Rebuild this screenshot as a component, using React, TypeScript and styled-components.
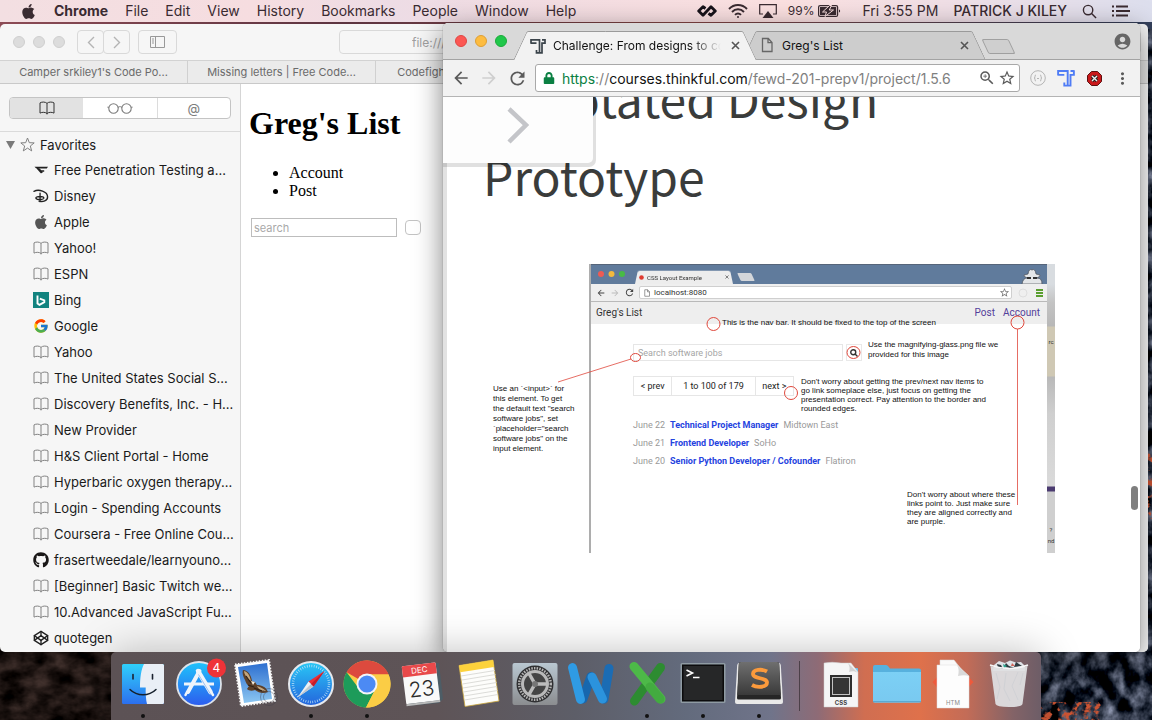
import React from "react";
import styled, { createGlobalStyle } from "styled-components";
import { FaApple, FaGithub, FaLock } from "react-icons/fa";
import { FcGoogle } from "react-icons/fc";
import { FiCodepen } from "react-icons/fi";
import {
  MdAccountCircle,
  MdArrowBack,
  MdArrowForward,
  MdMoreVert,
  MdRefresh,
  MdStarBorder,
  MdZoomIn,
} from "react-icons/md";

const GlobalStyle = createGlobalStyle`
  * { box-sizing: border-box; }
  body { margin: 0; font-family: Inter, "Liberation Sans", sans-serif; }
  button, input { font: inherit; color: inherit; margin: 0; padding: 0; }
  button { background: none; border: 0; }
  a { text-decoration: none; color: inherit; }
  ul { list-style: none; margin: 0; padding: 0; }
  svg { display: block; flex: none; }
`;

/* ---------- desktop ---------- */

const Desktop = styled.div`
  position: relative;
  display: grid;
  grid-template-rows: 23px minmax(0, 1fr) 68px;
  height: 100vh;
  overflow: hidden;
  background: linear-gradient(90deg, #8c4b55, #5c3440 30%, #8b4a48 60%, #33405c);
`;

const Wallpaper = styled.svg`
  position: absolute;
  left: 0;
  bottom: 0;
  width: 100%;
  height: 96%;
`;

const Workspace = styled.main`
  position: relative;
  min-width: 0;
`;

/* ---------- menu bar ---------- */

const MenuBar = styled.header`
  position: relative;
  display: flex;
  align-items: center;
  justify-content: space-between;
  height: 22px;
  padding: 0 22px 0 20px;
  font-size: 14px;
  line-height: 22px;
  color: #3a2b31;
  white-space: nowrap;
  background: linear-gradient(90deg, #f3dfe2, #f6dde0 22%, #eddce5 34%, #f3dde2 48%, #fbe0e0 68%, #f0dfe6 82%, #dddfee);
`;

const MenuGroup = styled.div<{ $gap: number }>`
  display: flex;
  align-items: center;
  gap: ${(p) => p.$gap}px;
`;

const MenuItem = styled.button<{ $weight?: number }>`
  font-weight: ${(p) => p.$weight ?? 400};
`;

const BatteryText = styled.span`
  font-size: 12px;
`;

/* ---------- safari ---------- */

const SafariWindow = styled.section`
  position: absolute;
  inset: 1px 4px 0 0;
  display: flex;
  flex-direction: column;
  overflow: hidden;
  border-radius: 5px;
  background: #f6f6f6;
`;

const SafariToolbar = styled.div`
  display: flex;
  align-items: center;
  height: 37px;
  padding: 0 7px 0 13px;
  border-bottom: 1px solid #d2d2d2;
`;

const Lights = styled.div<{ $gap: number }>`
  display: flex;
  gap: ${(p) => p.$gap}px;
`;

const Light = styled.button<{ $fill: string; $edge: string }>`
  width: 12px;
  height: 12px;
  border-radius: 50%;
  background: ${(p) => p.$fill};
  border: 1px solid ${(p) => p.$edge};
`;

const ToolButtons = styled.div`
  display: flex;
  margin-left: 12px;
  & + & { margin-left: 9px; }
`;

const ToolButton = styled.button<{ $width: number }>`
  display: flex;
  align-items: center;
  justify-content: center;
  width: ${(p) => p.$width}px;
  height: 24px;
  border: 1px solid #d9d9d9;
  border-radius: 4px;
  margin-right: -1px;
  color: #b4b4b4;
`;

const SafariAddress = styled.input`
  flex: 1;
  height: 24px;
  margin-left: 163px;
  padding-left: 72px;
  border: 1px solid #d9d9d9;
  border-radius: 4px;
  background: transparent;
  font-size: 12px;
  color: #a0a0a0;
`;

const SafariTabs = styled.div`
  display: flex;
  height: 23px;
  border-bottom: 1px solid #c9c9c9;
  background: #ebebeb;
`;

const SafariTab = styled.button`
  width: 188px;
  border-right: 1px solid #d0d0d0;
  font-size: 11px;
  color: #6a6a6a;
  white-space: nowrap;
`;

const SafariBody = styled.div`
  display: flex;
  flex: 1;
  min-height: 0;
`;

const Sidebar = styled.aside`
  width: 241px;
  flex: none;
  border-right: 1px solid #d5d5d5;
`;

const SegmentBar = styled.div`
  padding: 13px 9px 12px;
  border-bottom: 1px solid #dadada;
`;

const Segments = styled.div`
  display: grid;
  grid-template-columns: 1fr 1fr 1fr;
  height: 22px;
  overflow: hidden;
  border: 1px solid #c4c4c4;
  border-radius: 4px;
  background: #fff;
`;

const Segment = styled.button<{ $on?: boolean }>`
  display: flex;
  align-items: center;
  justify-content: center;
  font-size: 13px;
  color: ${(p) => (p.$on ? "#333" : "#7d7d7d")};
  background: ${(p) => (p.$on ? "#e2e2e2" : "transparent")};
  & + & + & { border-left: 1px solid #dcdcdc; }
`;

const FavoritesHead = styled.div`
  display: flex;
  align-items: center;
  gap: 5px;
  height: 25px;
  padding-left: 6px;
  font-size: 13px;
  color: #1a1a1a;
`;

const BookmarkLink = styled.a`
  display: flex;
  align-items: center;
  gap: 5px;
  height: 26px;
  padding-left: 33px;
  font-size: 13px;
  color: #1a1a1a;
  white-space: nowrap;
`;

const GregPage = styled.article`
  flex: 1;
  padding: 0 8px;
  background: #fff;
  color: #000;
  font-family: "Liberation Serif", serif;
  font-size: 16px;
  line-height: 18px;
`;

const GregTitle = styled.h1`
  margin: 21px 0 22px;
  font-size: 32px;
  line-height: 37px;
`;

const GregList = styled.ul`
  list-style: disc;
  padding-left: 40px;
  margin-bottom: 18px;
`;

const GregForm = styled.form`
  display: flex;
  align-items: center;
  gap: 8px;
  padding-left: 2px;
`;

const GregInput = styled.input`
  width: 146px;
  height: 19px;
  padding: 0 2px;
  border: 1px solid #bdbdbd;
  font: 11px Inter, sans-serif;
  &::placeholder { color: #a9a9a9; opacity: 1; }
`;

const GregSubmit = styled.button`
  width: 16px;
  height: 15px;
  border: 1px solid #c3c3c3;
  border-radius: 4px;
  background: #fff;
`;

/* ---------- chrome ---------- */

const ChromeWindow = styled.section`
  position: absolute;
  inset: 0 12px 0 443px;
  display: flex;
  flex-direction: column;
  border-radius: 5px;
  background: #fff;
  box-shadow: 0 0 1px rgba(0, 0, 0, 0.6), 0 8px 28px rgba(0, 0, 0, 0.5);
`;

const TabStrip = styled.div`
  display: flex;
  align-items: flex-end;
  height: 37px;
  padding: 0 8px 0 12px;
  border-bottom: 1px solid #a3a3a3;
  border-radius: 5px 5px 0 0;
  background: #d9d9d9;
`;

const StripLights = styled.div`
  align-self: center;
  margin-right: 13px;
`;

const ChromeTab = styled.div<{ $active?: boolean }>`
  position: relative;
  z-index: ${(p) => (p.$active ? 2 : 1)};
  display: flex;
  align-items: center;
  width: 230px;
  height: ${(p) => (p.$active ? 29 : 28)}px;
  margin-right: -1px;
  margin-bottom: ${(p) => (p.$active ? -1 : 0)}px;
  padding: 0 10px;
  font-size: 12px;
  color: #111;
  &::before,
  &::after {
    content: "";
    position: absolute;
    z-index: -1;
    top: 0;
    bottom: 0;
    background: ${(p) => (p.$active ? "#f2f2f2" : "#cdcdcd")};
    border-top: 1px solid #9a9a9a;
  }
  &::before {
    left: 0;
    right: 40%;
    border-left: 1px solid #9a9a9a;
    border-top-left-radius: 2px;
    transform: skewX(-25deg);
  }
  &::after {
    left: 40%;
    right: 0;
    border-right: 1px solid #9a9a9a;
    border-top-right-radius: 2px;
    transform: skewX(25deg);
  }
`;

const TabLabel = styled.a<{ $fade?: boolean }>`
  flex: 1;
  min-width: 0;
  margin: 0 10px 0 7px;
  overflow: hidden;
  white-space: nowrap;
  mask-image: ${(p) => (p.$fade ? "linear-gradient(90deg, #000 82%, transparent)" : "none")};
`;

const NewTab = styled.button`
  width: 27px;
  height: 15px;
  margin: 0 0 5px 7px;
  border: 1px solid #a0a0a0;
  border-radius: 2px;
  background: #cfcfcf;
  transform: skewX(25deg);
`;

const Profile = styled.button`
  align-self: center;
  margin-left: auto;
  color: #666;
`;

const ChromeToolbar = styled.div`
  display: flex;
  align-items: center;
  gap: 8px;
  height: 37px;
  padding: 0 8px;
  border-bottom: 1px solid #b4b4b4;
  background: #f2f2f2;
  color: #5a5a5a;
`;

const IconButton = styled.button<{ $dim?: boolean }>`
  display: flex;
  align-items: center;
  justify-content: center;
  width: 20px;
  height: 20px;
  flex: none;
  color: ${(p) => (p.$dim ? "#cfcfcf" : "#5a5a5a")};
`;

const Omnibox = styled.div`
  display: flex;
  align-items: center;
  flex: 1;
  min-width: 0;
  height: 28px;
  padding: 0 2px 0 7px;
  border: 1px solid #a9a9a9;
  border-radius: 3px;
  background: #fff;
`;

const Url = styled.div`
  display: flex;
  flex: 1;
  margin-left: 7px;
  font-size: 14px;
  white-space: nowrap;
  overflow: hidden;
`;

const UrlPart = styled.span<{ $color: string }>`
  color: ${(p) => p.$color};
`;

const Extensions = styled.div`
  display: flex;
  gap: 8px;
`;

const Viewport = styled.div`
  position: relative;
  flex: 1;
  min-height: 0;
  overflow: hidden;
  border-radius: 0 0 5px 5px;
  background: linear-gradient(90deg, #e2e2e2 4px, #fff 4px);
`;

const PagePanel = styled.button`
  position: absolute;
  top: 0;
  left: 0;
  display: flex;
  justify-content: center;
  width: 150px;
  height: 66px;
  padding-top: 9px;
  border-radius: 0 0 5px 0;
  background: #fdfdfd;
  box-shadow: 1px 2px 0 2px rgba(0, 0, 0, 0.12);
`;

const Lesson = styled.article`
  padding: 0 38px 0 40px;
`;

const LessonTitle = styled.h1`
  margin: -39px 0 50px;
  font: 400 48px "Noto Sans CJK SC", "Noto Sans", sans-serif;
  line-height: 78px;
  color: #3a3c3b;
`;

const ScrollThumb = styled.div`
  position: absolute;
  right: 2px;
  top: 70%;
  width: 7px;
  height: 24px;
  border-radius: 4px;
  background: #7f7f7f;
`;

/* ---------- annotated figure ---------- */

const Figure = styled.figure`
  position: relative;
  width: 564px;
  margin: 0 0 0 9px;
  padding-left: 97px;
`;

const Note = styled.p<{ $x: number; $y: number; $leading: number }>`
  position: absolute;
  left: ${(p) => p.$x}px;
  top: ${(p) => p.$y}px;
  margin: 0;
  font: 8px "Liberation Sans", sans-serif;
  line-height: ${(p) => p.$leading}px;
  color: #111;
  white-space: pre;
`;

const Marks = styled.svg`
  position: absolute;
  left: 0;
  top: 0;
  overflow: visible;
`;

const Shot = styled.div`
  display: flex;
  height: 289px;
  border-left: 2px solid #adadad;
  font-family: Roboto, sans-serif;
  font-size: 9px;
  line-height: 11px;
  color: #333;
`;

const ShotWindow = styled.div`
  width: 456px;
`;

const ShotTabs = styled.div`
  display: flex;
  align-items: flex-end;
  height: 20px;
  padding-left: 7px;
  border-top: 1px solid #56657a;
  background: #607b9c;
`;

const ShotTab = styled.div`
  position: relative;
  z-index: 1;
  display: flex;
  align-items: center;
  gap: 3px;
  width: 98px;
  height: 14px;
  margin-left: 9px;
  padding: 0 4px;
  font-size: 6px;
  &::before {
    content: "";
    position: absolute;
    z-index: -1;
    inset: 0;
    background: #ededed;
    border-radius: 2px 2px 0 0;
    transform: perspective(20px) rotateX(5deg);
    transform-origin: bottom;
  }
`;

const ShotNewTab = styled.div`
  width: 14px;
  height: 8px;
  margin: 0 0 3px 6px;
  border-radius: 1px;
  background: #d3d6da;
  transform: skewX(25deg);
`;

const ShotBar = styled.div`
  display: flex;
  align-items: center;
  gap: 4px;
  height: 18px;
  padding: 0 3px 0 5px;
  border-bottom: 1px solid #b9b9b9;
  background: #efefef;
`;

const ShotAddress = styled.div`
  display: flex;
  align-items: center;
  gap: 3px;
  flex: 1;
  height: 13px;
  padding: 0 1px 0 3px;
  border: 1px solid #cfcfcf;
  border-radius: 2px;
  background: #fff;
  font-size: 8px;
`;

const ShotAddressText = styled.span`
  flex: 1;
  white-space: nowrap;
`;

const ShotNav = styled.div`
  display: flex;
  gap: 8px;
  height: 22px;
  padding: 5px 7px 0 5px;
  background: #eee;
  font-size: 10px;
`;

const ShotBrand = styled.span`
  flex: 1;
`;

const PurpleLink = styled.a`
  color: #52409a;
`;

const ShotBody = styled.div`
  padding: 20px 42px;
`;

const ShotSearch = styled.form`
  display: flex;
  gap: 3px;
  margin-bottom: 15px;
`;

const ShotInput = styled.input`
  width: 210px;
  height: 17px;
  padding: 0 4px;
  border: 1px solid #e6e6e6;
  background: transparent;
  &::placeholder { color: #a5a5a5; opacity: 1; }
`;

const ShotSubmit = styled.button`
  display: flex;
  align-items: center;
  justify-content: center;
  width: 16px;
  height: 17px;
  border: 1px solid #e9e9e9;
`;

const Pager = styled.div`
  display: flex;
  width: 161px;
  height: 20px;
  margin-bottom: 20px;
  border: 1px solid #e6e6e6;
`;

const PagerCell = styled.button<{ $grow: number }>`
  flex: ${(p) => p.$grow} 0 0;
  color: #222;
  & + & { border-left: 1px solid #e6e6e6; }
`;

const JobRow = styled.li`
  display: flex;
  gap: 5px;
  height: 18px;
  line-height: 18px;
  color: #999;
  white-space: nowrap;
`;

const JobLink = styled.a`
  font-weight: 700;
  color: #2543e0;
`;

const Backdrop = styled.div`
  display: flex;
  flex-direction: column;
  align-items: center;
  width: 8px;
  padding-top: 72px;
  overflow: hidden;
  background: linear-gradient(
      #d8dce0 0 20px, #c4c4c4 38px, #b8b8b8 62px, #cfc8b4 63px 112px, #b9b9b9 113px,
      #cfcfcf 150px, #dadada 222px, #4b3b70 223px 227px, #cfcfcf 228px
    );
  font-size: 6px;
`;

const BackdropGap = styled.div`
  height: 177px;
  flex: none;
`;

/* ---------- dock ---------- */

const DockArea = styled.footer`
  position: relative;
  display: flex;
  justify-content: center;
`;

const DockBar = styled.nav`
  display: flex;
  padding: 0 4px;
  border-radius: 5px 5px 0 0;
  background: linear-gradient(
    90deg, #5c5255, #5e5457 35%, #5d5e68 50%, #636b7d 62%, #70748a 71%, #8e6b76 76%,
    #d06e51 81%, #df714b 87%, #c36c57 92%, #836367 97%, #6d5d67
  );
  box-shadow: 0 0 40px rgba(0, 0, 0, 0.25);
`;

const DockItem = styled.button<{ $running?: boolean }>`
  position: relative;
  display: flex;
  justify-content: center;
  width: 56px;
  padding-top: 7px;
  &::after {
    content: "";
    position: absolute;
    bottom: 2px;
    left: 26px;
    width: 4px;
    height: 4px;
    border-radius: 50%;
    background: ${(p) => (p.$running ? "#111" : "transparent")};
  }
`;

const DockDivider = styled.div`
  width: 26px;
  padding: 9px 12px;
  &::before {
    content: "";
    display: block;
    width: 1px;
    height: 50px;
    background: #4b4048;
  }
`;

/* ---------- drawings ---------- */

const BookIcon = ({ color = "currentColor" }: { color?: string }) => (
  <svg width="16" height="14" viewBox="0 0 16 14" fill="none" stroke={color}>
    <path d="M8 2.400C6.600.800 3 .600 1 1.900v10.200c2-1.200 5.600-1 7 .4 1.400-1.400 5-1.600 7-.4V1.900C13 .6 9.400.8 8 2.400v11" />
  </svg>
);

const WingGlyph = () => (
  <svg width="16" height="16" viewBox="0 0 16 16">
    <path d="M1.500 4.800H15l-1.200 1.700H5.500L3 6.300Z" fill="#222" />
    <path d="M4 6l4 4.500 1.500-.2M5.500 6.500l2.700 2.500h3" fill="none" stroke="#222" strokeWidth="1.300" />
  </svg>
);

const DisneyGlyph = () => (
  <svg width="16" height="16" viewBox="0 0 17 16" fill="none" stroke="#222" strokeLinecap="round">
    <path d="M1 3c5-2.500 14.500 0 14.500 6 0 4-5 5.500-9 4.500" strokeWidth="1.500" />
    <path d="M7.500 5v9M3 10c0-2 9-2 8.500.3C11 12 4 12.500 3 10Z" strokeWidth="1.400" />
  </svg>
);

const BingGlyph = () => (
  <svg width="16" height="16" viewBox="0 0 16 16">
    <rect width="16" height="16" fill="#12837f" />
    <path d="M4.500 3.500v8l2 1.300 4.800-2.700V8.300L6.800 6.600" fill="none" stroke="#fff" strokeWidth="1.900" />
  </svg>
);

const ThinkfulGlyph = ({ color, size }: { color: string; size: number }) => (
  <svg width={size} height={size} viewBox="0 0 16 16" fill="none" stroke={color} strokeWidth="1.700">
    <path d="M1 5.800V1.800h8.500v13M1 5.200h5.500M15 1v4.200h-3v9.600H6.500V12M12 1.800h3" />
  </svg>
);

const PageGlyph = ({ size }: { size: number }) => (
  <svg width={size} height={size} viewBox="0 0 16 16" fill="none" stroke="#666" strokeWidth="1.300">
    <path d="M3.500 1.500h5.800l3.700 4v9H3.500ZM9 1.500v4.200h4" />
  </svg>
);

const CloseGlyph = ({ size = 9 }: { size?: number }) => (
  <svg width={size} height={size} viewBox="0 0 9 9" stroke="#555" strokeWidth="1.600">
    <path d="M1 1l7 7M8 1L1 8" />
  </svg>
);

const MagnifierGlyph = ({ size, weight }: { size: number; weight: number }) => (
  <svg width={size} height={size} viewBox="0 0 16 16" fill="none" stroke="currentColor" strokeWidth={weight}>
    <circle cx="6.500" cy="6.500" r="5" />
    <path d="M10.200 10.200L15 15" />
  </svg>
);

const InfinityGlyph = () => (
  <svg width="20" height="12" viewBox="0 0 20 12" fill="none" stroke="#17131a" strokeWidth="2.800" strokeLinejoin="round">
    <path d="M8.500 3.500L6 1.700 1.700 6 6 10.300 14 1.700 18.300 6 14 10.300 11.500 8.300" />
  </svg>
);

const WifiGlyph = () => (
  <svg width="20" height="16" viewBox="0 0 20 16" fill="none" stroke="#3a2b31" strokeWidth="1.900">
    <path d="M1 6c5-5.300 13-5.300 18 0M4 9c3.400-3.600 8.600-3.600 12 0M7 11.900c1.700-1.800 4.300-1.800 6 0" />
    <circle cx="10" cy="14" r="1" fill="#3a2b31" stroke="none" />
  </svg>
);

const AirplayGlyph = () => (
  <svg width="18" height="14" viewBox="0 0 18 14">
    <path d="M4 10H.7V.7h16.600V10H14" fill="none" stroke="#3a2b31" strokeWidth="1.200" />
    <path d="M9 7l5.500 7h-11Z" fill="#3a2b31" />
  </svg>
);

const BatteryGlyph = () => (
  <svg width="23" height="12" viewBox="0 0 23 12">
    <rect x=".600" y=".600" width="19" height="10.800" rx="1.500" fill="none" stroke="#3a2b31" strokeWidth="1.200" />
    <rect x="2" y="2" width="16.200" height="8" fill="#3a2b31" />
    <path d="M21 4.500c1.500.3 1.500 2.700 0 3Z" fill="#3a2b31" />
    <path d="M11.500 .500L4.500 7h4l-1.500 4.500L15.500 5H11.300l2.200-4.500Z" fill="#3a2b31" stroke="#fbe0e0" />
  </svg>
);

const ListGlyph = () => (
  <svg width="18" height="12" viewBox="0 0 18 12" stroke="#3a2b31" strokeWidth="1.800">
    <path d="M0 1.500h2M4 1.500h12M0 6h2M4 6h14M0 10.500h2M4 10.500h12" />
  </svg>
);

const GlassesGlyph = () => (
  <svg width="26" height="12" viewBox="0 0 26 12" fill="none" stroke="#7d7d7d" strokeWidth="1.100">
    <circle cx="6.500" cy="6.500" r="4.700" />
    <circle cx="19.500" cy="6.500" r="4.700" />
    <path d="M11 5.500c1-1 3-1 4 0M1.800 5.500L.5 5M24.200 5.500l1.300-.5" />
  </svg>
);

const DockSvg = ({ children }: { children: React.ReactNode }) => (
  <svg width="50" height="50" viewBox="0 0 50 50" overflow="visible">
    {children}
  </svg>
);

const FinderArt = () => (
  <DockSvg>
    <defs>
      <linearGradient id="finderBlue" x2="0" y2="1"><stop stopColor="#2fd0fb" /><stop offset="1" stopColor="#2c6fee" /></linearGradient>
    </defs>
    <rect x="4" y="5" width="42" height="40" rx="1.500" fill="url(#finderBlue)" />
    <path d="M26 5h18.500q1.500 0 1.500 1.500v37q0 1.500-1.500 1.500H29c-1-4-1.500-10-1.300-16.500H22C22 19 23 11 26 5Z" fill="#e9eff6" />
    <path d="M15 15.500v4.500M34.500 15.500v4.500" stroke="#1b2230" strokeWidth="1.600" strokeLinecap="round" />
    <path d="M12 30.500c7 7 19 7 26 0" fill="none" stroke="#15202c" strokeWidth="1.500" strokeLinecap="round" />
  </DockSvg>
);

const AppStoreArt = () => (
  <DockSvg>
    <defs>
      <linearGradient id="storeBlue" x2="0" y2="1"><stop stopColor="#1fc4fb" /><stop offset="1" stopColor="#2d5bee" /></linearGradient>
    </defs>
    <circle cx="25" cy="25" r="22" fill="url(#storeBlue)" stroke="#dde3ea" strokeWidth="1.800" />
    <g stroke="#eef4fb" strokeLinecap="round" fill="none">
      <path d="M25.500 12L14 33" strokeWidth="4" />
      <path d="M24 12l12.500 21" strokeWidth="4.500" />
      <path d="M10 25h30" strokeWidth="3" strokeLinecap="butt" />
      <path d="M13 33l-1.500 3M37 33l2 3" strokeWidth="2.500" />
    </g>
    <path d="M24.500 15.500L37 36" stroke="#7aa9ee" strokeWidth=".700" />
    <circle cx="42.500" cy="9" r="9.500" fill="#ef3338" />
    <text x="42.500" y="13" textAnchor="middle" fontSize="12" fontFamily="Inter, sans-serif" fill="#fff">4</text>
  </DockSvg>
);

const MailArt = () => (
  <DockSvg>
    <defs>
      <linearGradient id="mailSky" x2="0" y2="1"><stop stopColor="#2d6fd0" /><stop offset="1" stopColor="#8cc6f1" /></linearGradient>
    </defs>
    <path d="M5 5.500L39 1l6 41-34 5Z" fill="#fff" stroke="#f4f4f4" strokeWidth="2" strokeDasharray="1.500 1.500" />
    <path d="M8 8l29-4 5 36-28 4Z" fill="url(#mailSky)" />
    <path d="M13 11c5 0 8 5 9 11l3 1 2 3c5 0 9 2 11 7-5 2-9 1-13-2-3 1-6 1-8-1l2-3c-2-1-3-3-4-6-2-4-3-7-2-10Z" fill="#5d4029" />
    <path d="M14 12c4 1 6 5 7 10l-3-2c-2-3-4-5-4-8ZM27 27c4 1 7 3 9 5-4 0-8-2-9-5Z" fill="#c3a67e" />
    <path d="M16 17l5 7M18 26l6 2M24 29l8 3" stroke="#2e2118" strokeWidth="1.200" />
    <path d="M21 22l4 1-2 3Z" fill="#f3ead9" />
    <circle cx="39" cy="38" r="8.500" fill="none" stroke="#3f3f4a" strokeWidth=".700" opacity=".600" />
    <circle cx="39" cy="38" r="5.500" fill="none" stroke="#3f3f4a" strokeWidth=".700" opacity=".600" />
  </DockSvg>
);

const SafariArt = () => (
  <DockSvg>
    <defs>
      <linearGradient id="compass" x2="0" y2="1"><stop stopColor="#29c8f6" /><stop offset="1" stopColor="#2463dc" /></linearGradient>
    </defs>
    <circle cx="25" cy="25" r="22" fill="url(#compass)" stroke="#e6e9ee" strokeWidth="2" />
    <circle cx="25" cy="25" r="18" fill="none" stroke="#bfe3f8" strokeWidth="2.500" strokeDasharray=".700 1.656" />
    <path d="M38.500 12L22.500 22.500l5 5Z" fill="#ee2f36" />
    <path d="M11.500 38.500l11-16 5 5Z" fill="#eef0f2" />
    <path d="M25 25L11.500 38.500l16-11Z" fill="#bfc6cf" />
    <path d="M25 25l13.500-13-11 15.500Z" fill="#c41e2a" />
  </DockSvg>
);

const ChromeArt = () => (
  <DockSvg>
    <circle cx="25" cy="25" r="23.500" fill="#fbcd45" />
    <path d="M25 25L4.600 13.300A23.500 23.500 0 0 1 46.600 15.500H25Z" fill="#dc4a3e" />
    <path d="M4.600 13.300A23.500 23.500 0 0 0 24 48.500L33.500 30 25 25 15 27Z" fill="#1d9b5a" />
    <path d="M25 15.500h21.600A23.500 23.500 0 0 1 24 48.500L34 29Z" fill="#fbcd45" />
    <circle cx="25" cy="25" r="10.500" fill="#f4f5f7" />
    <circle cx="25" cy="25" r="8.600" fill="#4c8af4" />
  </DockSvg>
);

const CalendarArt = () => (
  <DockSvg>
    <path d="M9 9l32-5 4 36-4 4-32 3Z" fill="#4d5d66" />
    <g transform="rotate(-7 25 25)">
      <rect x="6" y="5" width="34" height="38" rx="1" fill="#f9f9f9" />
      <path d="M6 6q0-1 1-1h32q1 0 1 1v10H6Z" fill="#e8494a" />
      <path d="M6 43h34v2H6Z" fill="#b9b9b9" />
      <text x="23" y="13.500" textAnchor="middle" fontSize="8" fontFamily="Inter, sans-serif" fill="#fff">DEC</text>
      <text x="23" y="37" textAnchor="middle" fontSize="21" fontWeight="300" fontFamily="Inter, sans-serif" fill="#2b2b2b">23</text>
    </g>
  </DockSvg>
);

const NotesArt = () => (
  <DockSvg>
    <path d="M5 6.500L39 1l6 41-34 5.500Z" fill="#fdfdfb" stroke="#cba83d" strokeWidth=".800" />
    <path d="M5 6.500L39 1l1 7L6.300 13.300Z" fill="#fcd23c" />
    <path d="M7 17l34-5.500M8 21l33.500-5.500M8.500 25L42 19.500M9 29l33.500-5.500M9.500 33L43 27.500M10 37l33.500-5.500M10.500 41L44 35.500" stroke="#d3d3cf" strokeWidth=".800" />
  </DockSvg>
);

const SettingsArt = () => (
  <DockSvg>
    <defs>
      <linearGradient id="steel" x2="0" y2="1"><stop stopColor="#b9c7d1" /><stop offset="1" stopColor="#8b8d90" /></linearGradient>
    </defs>
    <rect x="2.500" y="4" width="45" height="42" rx="2" fill="url(#steel)" />
    <circle cx="25" cy="25" r="18.500" fill="#2f2f31" />
    <circle cx="25" cy="25" r="15.800" fill="none" stroke="#b5b5b5" strokeWidth="2.500" strokeDasharray="1.500 1.200" />
    <circle cx="25" cy="25" r="12.500" fill="#444" stroke="#b9b9b9" strokeWidth="3" />
    <path d="M25 25h12M25 25l-6-10.500M25 25l-6 10.500" stroke="#bcbcbc" strokeWidth="3.500" />
    <circle cx="25" cy="25" r="3" fill="#777" />
  </DockSvg>
);

const WordArt = () => (
  <DockSvg>
    <g strokeLinecap="round" fill="none" strokeWidth="9">
      <path d="M43 9.500L38 40" stroke="#1b6cb4" />
      <path d="M25 17.500L17 40" stroke="#1767ae" />
      <path d="M6.500 8.500L14.500 40.500" stroke="#2f9be4" />
      <path d="M26 18l10.500 22" stroke="#2b93dd" />
    </g>
  </DockSvg>
);

const ExcelArt = () => (
  <DockSvg>
    <g strokeLinecap="round" fill="none" strokeWidth="9">
      <path d="M38.500 8.500L28 23" stroke="#2d8c31" />
      <path d="M12.500 42l10-14" stroke="#2d8c31" />
      <path d="M12 7.500L39 40" stroke="#4db948" />
      <path d="M38 40L28 28" stroke="#43ab40" />
    </g>
  </DockSvg>
);

const TerminalArt = () => (
  <DockSvg>
    <rect x="2.500" y="4" width="45" height="40" rx="1.500" fill="#8f9ba3" />
    <rect x="4" y="5.500" width="42" height="37" fill="#0b0b0c" />
    <rect x="5.500" y="7" width="39" height="34" fill="#262728" />
    <path d="M8.500 11l6 3-6 3" fill="none" stroke="#fff" strokeWidth="1.600" />
    <path d="M15 18.500h6.500" stroke="#fff" strokeWidth="1.500" />
  </DockSvg>
);

const SublimeArt = () => (
  <DockSvg>
    <defs>
      <linearGradient id="keycap" x2="0" y2="1"><stop stopColor="#6f6f6f" /><stop offset="1" stopColor="#3a3a3a" /></linearGradient>
    </defs>
    <path d="M5.500 4h39q2 0 2.300 2L49 43q0 2-2 2H3q-2 0-2-2L3.200 6q.3-2 2.300-2Z" fill="#e9e9e9" />
    <path d="M7 3h36q2 0 2.200 2L47 39q0 1.500-1.500 1.500h-41Q3 40.500 3 39L4.800 5Q5 3 7 3Z" fill="#262626" />
    <path d="M7 3h36q2 0 2.200 2L46.500 36h-43L4.800 5Q5 3 7 3Z" fill="url(#keycap)" />
    <path d="M33 12.500c-5-3-14-2-14 2.500 0 5 14 3.500 14 8.500 0 5-10 5.500-15 2.500" fill="none" stroke="#fb9a3c" strokeWidth="3.800" />
  </DockSvg>
);

const CssArt = () => (
  <DockSvg>
    <rect x="8" y="9" width="34" height="24" rx="1" fill="#6cc5ef" />
    <path d="M8 4q8-1.500 17 0l10 0 7 9v35H8Z" fill="#f5f5f5" stroke="#cfcfcf" strokeWidth=".500" />
    <path d="M32 4c2 4 2 6 1 9 3-1 6-1 9 1Z" fill="#d2d2d2" />
    <rect x="14" y="16" width="22" height="22" fill="#2e2e2e" />
    <rect x="16.500" y="18.500" width="17" height="17" fill="#353535" stroke="#c2c2c2" />
    <text x="25" y="45.500" textAnchor="middle" fontSize="6" fontWeight="700" fontFamily="Inter, sans-serif" fill="#444">CSS</text>
  </DockSvg>
);

const FolderArt = () => (
  <DockSvg>
    <defs>
      <linearGradient id="folder" x2="0" y2="1"><stop stopColor="#7cd0f5" /><stop offset="1" stopColor="#79c9f0" /></linearGradient>
    </defs>
    <path d="M1 8q0-2 2-2h11q1 0 2 1l2 2.500h29q2 0 2 2V42q0 1.500-2 1.500H3q-2 0-2-1.500Z" fill="#57b1de" />
    <path d="M1 13h48v29q0 1.500-2 1.500H3q-2 0-2-1.500Z" fill="url(#folder)" />
    <path d="M1 42.500h48" stroke="#5aa9d2" />
  </DockSvg>
);

const HtmArt = () => (
  <DockSvg>
    <path d="M4.500 23L12 15v17ZM45.500 23L37 14v18Z" fill="#ee5a3c" />
    <path d="M12 1h14l12 15v10H12Z" fill="#fafafa" stroke="#d9d9d9" strokeWidth=".500" />
    <path d="M9 6h20l12 11v32H9Z" fill="#fdfdfd" stroke="#dcdcdc" strokeWidth=".500" />
    <path d="M29 6c2 3 2 7 1 11 4-1 8-1 11 0Z" fill="#d9d9d9" />
    <text x="25" y="46" textAnchor="middle" fontSize="6" fontFamily="Inter, sans-serif" fill="#8a8a8a">HTM</text>
  </DockSvg>
);

const TrashArt = () => (
  <DockSvg>
    <path d="M10 6l5-4 6 2 5-2.500 6 2 5-.5 4 4v5H9Z" fill="#dfe2e6" />
    <path d="M13 5l4 1 2 4-5-1ZM22 4l5 5-7-1ZM32 3l6 4-8 1ZM25 7l6 2-6 1Z" fill="#2f3a40" />
    <path d="M19 5l4 2-3 2Z" fill="#2aa58d" />
    <path d="M28 4l3 3h-4Z" fill="#d0655a" />
    <path d="M6.500 7q18.500 6 37 0L38.500 45q-1 3-13.500 3t-13.500-3Z" fill="#dfdfe1" opacity=".940" />
    <path d="M12 14l4 14-3 12M22 14l-2 16 6 12M34 13l-6 14 6 14M39 14l-3 12" fill="none" stroke="#d0d1d5" />
    <path d="M6 6q19 7 38 0" fill="none" stroke="#f6f6f6" strokeWidth="1.500" />
  </DockSvg>
);

/* ---------- data ---------- */

const menus = ["File", "Edit", "View", "History", "Bookmarks", "People", "Window", "Help"];

const bookmarks: [string, React.ReactNode?][] = [
  ["Free Penetration Testing a...", <WingGlyph key="w" />],
  ["Disney", <DisneyGlyph key="d" />],
  ["Apple", <FaApple key="a" size={16} color="#555" />],
  ["Yahoo!"],
  ["ESPN"],
  ["Bing", <BingGlyph key="b" />],
  ["Google", <FcGoogle key="g" size={16} />],
  ["Yahoo"],
  ["The United States Social S..."],
  ["Discovery Benefits, Inc. - H..."],
  ["New Provider"],
  ["H&S Client Portal - Home"],
  ["Hyperbaric oxygen therapy..."],
  ["Login - Spending Accounts"],
  ["Coursera - Free Online Cou..."],
  ["frasertweedale/learnyouno...", <FaGithub key="gh" size={16} color="#191717" />],
  ["[Beginner] Basic Twitch we..."],
  ["10.Advanced JavaScript Fu..."],
  ["quotegen", <FiCodepen key="cp" size={16} color="#222" />],
];

const jobs = [
  ["June 22", "Technical Project Manager", "Midtown East"],
  ["June 21", "Frontend Developer", "SoHo"],
  ["June 20", "Senior Python Developer / Cofounder", "Flatiron"],
];

const notes = [
  { x: 230, y: 54, leading: 9, text: "This is the nav bar. It should be fixed to the top of the screen" },
  { x: 376, y: 76, leading: 10, text: "Use the magnifying-glass.png file we\nprovided for this image" },
  { x: 309, y: 113, leading: 9, text: "Don't worry about getting the prev/next nav items to\ngo link someplace else, just focus on getting the\npresentation correct. Pay attention to the border and\nrounded edges." },
  { x: 1, y: 120, leading: 10, text: "Use an `<input>` for\nthis element. To get\nthe default text \"search\nsoftware jobs\", set\n`placeholder=\"search\nsoftware jobs\" on the\ninput element." },
  { x: 415, y: 226, leading: 9, text: "Don't worry about where these\nlinks point to. Just make sure\nthey are aligned correctly and\nare purple." },
];

const dockApps: [string, () => React.JSX.Element, boolean][] = [
  ["Finder", FinderArt, true],
  ["App Store", AppStoreArt, false],
  ["Mail", MailArt, false],
  ["Safari", SafariArt, true],
  ["Chrome", ChromeArt, true],
  ["Calendar", CalendarArt, false],
  ["Notes", NotesArt, false],
  ["System Preferences", SettingsArt, false],
  ["Word", WordArt, false],
  ["Excel", ExcelArt, true],
  ["Terminal", TerminalArt, true],
  ["Sublime Text", SublimeArt, true],
];

const dockFiles: [string, () => React.JSX.Element][] = [
  ["Stylesheets", CssArt],
  ["Folder", FolderArt],
  ["Pages", HtmArt],
  ["Trash", TrashArt],
];

/* ---------- sections ---------- */

const Mountains = () => (
  <Wallpaper viewBox="0 0 1152 692" preserveAspectRatio="none" colorInterpolationFilters="sRGB" aria-hidden="true">
    <defs>
      <filter id="rock" x="0" y="0" width="100%" height="100%">
        <feTurbulence type="fractalNoise" baseFrequency=".04 .06" numOctaves="4" seed="4" />
        <feColorMatrix values="0.45 0 0 0 -0.11  0.36 0 0 0 -0.1  0.34 0 0 0 -0.1  0 0 0 0 1" />
      </filter>
      <filter id="snow" x="0" y="0" width="100%" height="100%">
        <feTurbulence type="fractalNoise" baseFrequency=".06 .05" numOctaves="4" seed="9" />
        <feColorMatrix values="1.3 0 0 0 -0.52  1.3 0 0 0 -0.49  1.4 0 0 0 -0.48  0 0 0 0 1" />
      </filter>
      <filter id="ember" x="0" y="0" width="100%" height="100%">
        <feTurbulence type="fractalNoise" baseFrequency=".12" numOctaves="3" seed="2" />
        <feColorMatrix values="0 0 0 0 0.8  0 0 0 0 0.33  0 0 0 0 0.2  8 0 0 0 -4" />
      </filter>
    </defs>
    <rect y="600" width="140" height="92" filter="url(#rock)" />
    <rect x="1020" width="132" height="692" filter="url(#snow)" />
    <rect x="1140" y="425" width="12" height="65" filter="url(#ember)" />
    <rect x="1036" y="674" width="66" height="18" filter="url(#ember)" />
  </Wallpaper>
);

const TopBar = () => (
  <MenuBar>
    <MenuGroup as="nav" $gap={17}>
      <FaApple size={17} />
      <MenuItem $weight={700}>Chrome</MenuItem>
      {menus.map((m) => (
        <MenuItem key={m}>{m}</MenuItem>
      ))}
    </MenuGroup>
    <MenuGroup $gap={21}>
      <MenuGroup $gap={11}>
        <InfinityGlyph />
        <WifiGlyph />
        <AirplayGlyph />
        <MenuGroup $gap={4}>
          <BatteryText>99%</BatteryText>
          <BatteryGlyph />
        </MenuGroup>
      </MenuGroup>
      <MenuGroup $gap={15}>
        <MenuItem>Fri 3:55 PM</MenuItem>
        <MenuItem $weight={500}>PATRICK J KILEY</MenuItem>
        <MagnifierGlyph size={15} weight={1.5} />
        <ListGlyph />
      </MenuGroup>
    </MenuGroup>
  </MenuBar>
);

const Safari = () => (
  <SafariWindow aria-label="Safari">
    <SafariToolbar>
      <Lights $gap={8}>
        {["Close", "Minimize", "Zoom"].map((n) => (
          <Light key={n} aria-label={n} $fill="#dcdcdc" $edge="#cfcfcf" />
        ))}
      </Lights>
      <ToolButtons>
        <ToolButton $width={27} aria-label="Back">
          <svg width="8" height="13" viewBox="0 0 8 13" fill="none" stroke="currentColor" strokeWidth="1.400"><path d="M7 1L1.500 6.500 7 12" /></svg>
        </ToolButton>
        <ToolButton $width={27} aria-label="Forward">
          <svg width="8" height="13" viewBox="0 0 8 13" fill="none" stroke="currentColor" strokeWidth="1.400"><path d="M1 1l5.500 5.500L1 12" /></svg>
        </ToolButton>
      </ToolButtons>
      <ToolButtons>
        <ToolButton $width={39} aria-label="Sidebar">
          <svg width="15" height="12" viewBox="0 0 15 12" fill="none" stroke="#999"><path d="M.5.5h14v11H.5ZM5.500.5v11M2 3h2M2 5h2M2 7h2" /></svg>
        </ToolButton>
      </ToolButtons>
      <SafariAddress aria-label="Address" defaultValue="file:///Users/" />
    </SafariToolbar>
    <SafariTabs>
      <SafariTab>Camper srkiley1's Code Po...</SafariTab>
      <SafariTab>Missing letters | Free Code...</SafariTab>
      <SafariTab>Codefights | Interview Pra...</SafariTab>
    </SafariTabs>
    <SafariBody>
      <Sidebar>
        <SegmentBar>
          <Segments>
            <Segment $on aria-label="Bookmarks"><BookIcon /></Segment>
            <Segment aria-label="Reading list"><GlassesGlyph /></Segment>
            <Segment aria-label="Shared links">@</Segment>
          </Segments>
        </SegmentBar>
        <FavoritesHead>
          <svg width="9" height="8" viewBox="0 0 9 8"><path d="M0 0h9L4.500 8Z" fill="#7a7a7a" /></svg>
          <svg width="15" height="15" viewBox="0 0 15 15" fill="none" stroke="#808080"><path d="M7.500 1l1.800 4.700 4.900.2-3.900 3.100 1.400 4.900-4.200-2.800-4.200 2.800L4.700 9 .8 5.900l4.900-.2Z" /></svg>
          Favorites
        </FavoritesHead>
        <ul>
          {bookmarks.map(([label, icon]) => (
            <li key={label}>
              <BookmarkLink href="#">
                {icon ?? <BookIcon color="#838383" />}
                {label}
              </BookmarkLink>
            </li>
          ))}
        </ul>
      </Sidebar>
      <GregPage>
        <GregTitle>Greg's List</GregTitle>
        <GregList>
          <li>Account</li>
          <li>Post</li>
        </GregList>
        <GregForm>
          <GregInput placeholder="search" aria-label="search" />
          <GregSubmit type="button" aria-label="Submit" />
        </GregForm>
      </GregPage>
    </SafariBody>
  </SafariWindow>
);

const AnnotatedFigure = () => (
  <Figure>
    <Shot>
      <ShotWindow>
        <ShotTabs>
          <svg width="28" height="20" viewBox="0 0 28 20">
            <circle cx="3" cy="10" r="3" fill="#ee5b53" />
            <circle cx="13.500" cy="10" r="3" fill="#f3b93d" />
            <circle cx="24" cy="10" r="3" fill="#48bb45" />
          </svg>
          <ShotTab>
            <svg width="5" height="5" viewBox="0 0 5 5"><circle cx="2.500" cy="2.500" r="2.300" fill="#df3b31" /></svg>
            <ShotAddressText>CSS Layout Example</ShotAddressText>
            <CloseGlyph size={4} />
          </ShotTab>
          <ShotNewTab />
          <svg width="291" height="18" viewBox="0 0 291 18">
            <path d="M269 18q1-6 5-6-4-2-3-3l4-1q1-6 4-4 3-2 4 4l4 1q1 1-3 3 5 0 5 6Z" fill="#e4e6e8" stroke="#4a4f57" strokeWidth=".700" />
            <path d="M274 11h4v2h-4ZM280 11h4v2h-4Z" fill="#333" />
          </svg>
        </ShotTabs>
        <ShotBar>
          <MdArrowBack size={10} color="#444" />
          <MdArrowForward size={10} color="#bbb" />
          <MdRefresh size={11} color="#444" />
          <ShotAddress>
            <PageGlyph size={8} />
            <ShotAddressText>localhost:8080</ShotAddressText>
            <MdStarBorder size={11} color="#777" />
          </ShotAddress>
          <svg width="28" height="10" viewBox="0 0 28 10">
            <circle cx="7" cy="5" r="4" fill="none" stroke="#dedede" />
            <path d="M20 2h7M20 5h7M20 8h7" stroke="#5a9e2f" strokeWidth="2" />
          </svg>
        </ShotBar>
        <ShotNav>
          <ShotBrand>Greg's List</ShotBrand>
          <PurpleLink href="#">Post</PurpleLink>
          <PurpleLink href="#">Account</PurpleLink>
        </ShotNav>
        <ShotBody>
          <ShotSearch>
            <ShotInput placeholder="Search software jobs" aria-label="Search software jobs" />
            <ShotSubmit type="button" aria-label="Search jobs">
              <MagnifierGlyph size={8} weight={2.8} />
            </ShotSubmit>
          </ShotSearch>
          <Pager>
            <PagerCell $grow={38}>&lt; prev</PagerCell>
            <PagerCell $grow={84}>1 to 100 of 179</PagerCell>
            <PagerCell $grow={38}>next &gt;</PagerCell>
          </Pager>
          <ul>
            {jobs.map(([date, title, place]) => (
              <JobRow key={title}>
                <span>{date}</span>
                <JobLink href="#">{title}</JobLink>
                <span>{place}</span>
              </JobRow>
            ))}
          </ul>
        </ShotBody>
      </ShotWindow>
      <Backdrop>
        <span>rc</span>
        <BackdropGap />
        <span>?</span>
        <span>nd</span>
      </Backdrop>
    </Shot>
    {notes.map((n) => (
      <Note key={n.text} $x={n.x} $y={n.y} $leading={n.leading}>
        {n.text}
      </Note>
    ))}
    <Marks width="564" height="289" viewBox="0 0 564 289" fill="none" stroke="#e0483c">
      <circle cx="221.500" cy="60" r="6.500" />
      <ellipse cx="143.500" cy="93.500" rx="5" ry="4" />
      <ellipse cx="361.500" cy="88.500" rx="6.500" ry="6" />
      <circle cx="299" cy="129" r="6.500" />
      <circle cx="525.500" cy="58.500" r="6.500" />
      <path d="M525.500 65v176M66 118l73-23" strokeWidth=".800" />
    </Marks>
  </Figure>
);

const Chrome = () => (
  <ChromeWindow aria-label="Chrome">
    <TabStrip>
      <StripLights>
        <Lights $gap={8}>
          <Light aria-label="Close window" $fill="#fc5753" $edge="#df4744" />
          <Light aria-label="Minimize window" $fill="#fdbc40" $edge="#de9f34" />
          <Light aria-label="Zoom window" $fill="#20c74a" $edge="#1caa3a" />
        </Lights>
      </StripLights>
      <ChromeTab $active>
        <ThinkfulGlyph color="#3b444b" size={16} />
        <TabLabel href="#" $fade>Challenge: From designs to code</TabLabel>
        <CloseGlyph />
      </ChromeTab>
      <ChromeTab>
        <PageGlyph size={16} />
        <TabLabel href="#">Greg's List</TabLabel>
        <CloseGlyph />
      </ChromeTab>
      <NewTab aria-label="New tab" />
      <Profile aria-label="Profile"><MdAccountCircle size={19} /></Profile>
    </TabStrip>
    <ChromeToolbar>
      <IconButton aria-label="Go back"><MdArrowBack size={20} /></IconButton>
      <IconButton $dim aria-label="Go forward"><MdArrowForward size={20} /></IconButton>
      <IconButton aria-label="Reload"><MdRefresh size={21} /></IconButton>
      <Omnibox>
        <FaLock size={12} color="#0b8043" />
        <Url>
          <UrlPart $color="#0b8043">https</UrlPart>
          <UrlPart $color="#808080">://</UrlPart>
          <UrlPart $color="#111">courses.thinkful.com</UrlPart>
          <UrlPart $color="#808080">/fewd-201-prepv1/project/1.5.6</UrlPart>
        </Url>
        <IconButton aria-label="Zoom page"><MdZoomIn size={18} /></IconButton>
        <IconButton aria-label="Bookmark page"><MdStarBorder size={18} /></IconButton>
      </Omnibox>
      <Extensions>
        <IconButton aria-label="JSON viewer">
          <svg width="16" height="16" viewBox="0 0 16 16" fill="none" stroke="#b4b4b4">
            <circle cx="8" cy="8" r="7.300" />
            <path d="M6 5q-1.200 0-1 1.500T4 8q1.200 0 1 1.500T6 11M10 5q1.200 0 1 1.500T12 8q-1.200 0-1 1.500T10 11M7 8.500h2" />
          </svg>
        </IconButton>
        <IconButton aria-label="Thinkful"><ThinkfulGlyph color="#4f7cf5" size={18} /></IconButton>
        <IconButton aria-label="Blocker">
          <svg width="15" height="15" viewBox="0 0 15 15">
            <path d="M4.500.5h6l4 4v6l-4 4h-6l-4-4v-6Z" fill="#c9181a" stroke="#5b1010" />
            <path d="M5 5l5 5M10 5l-5 5" stroke="#222" strokeWidth="3.200" />
            <path d="M5 5l5 5M10 5l-5 5" stroke="#eee" strokeWidth="1.400" />
          </svg>
        </IconButton>
        <IconButton aria-label="Menu"><MdMoreVert size={19} /></IconButton>
      </Extensions>
    </ChromeToolbar>
    <Viewport>
      <Lesson>
        <LessonTitle>Annotated Design<br />Prototype</LessonTitle>
        <AnnotatedFigure />
      </Lesson>
      <PagePanel aria-label="Open contents">
        <svg width="22" height="40" viewBox="0 0 22 40" fill="none" stroke="#c4c5c9" strokeWidth="4.500">
          <path d="M2 3l17 16L2 36" />
        </svg>
      </PagePanel>
      <ScrollThumb />
    </Viewport>
  </ChromeWindow>
);

const Dock = () => (
  <DockArea>
    <DockBar aria-label="Dock">
      {dockApps.map(([name, Art, running]) => (
        <DockItem key={name} aria-label={name} $running={running}><Art /></DockItem>
      ))}
      <DockDivider />
      {dockFiles.map(([name, Art]) => (
        <DockItem key={name} aria-label={name}><Art /></DockItem>
      ))}
    </DockBar>
  </DockArea>
);

export default function App() {
  return (
    <Desktop>
      <GlobalStyle />
      <Mountains />
      <TopBar />
      <Workspace>
        <Safari />
        <Chrome />
      </Workspace>
      <Dock />
    </Desktop>
  );
}
